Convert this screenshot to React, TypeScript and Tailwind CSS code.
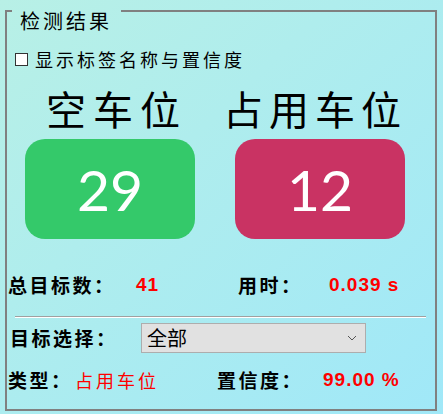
import React from "react";

const CJK = "font-['Noto_Sans_CJK_SC',sans-serif]";
const NUM = "font-['Liberation_Sans','Noto_Sans_CJK_SC',sans-serif]";

export default function App() {
  return (
    <div className="w-[443px] h-[414px] overflow-hidden bg-linear-to-br from-[#b8f0e6] to-[#a0e8f8] pt-[10px] pl-[5px]">
      <fieldset className="w-[432px] h-[401px] border-2 border-[#808080]">
        {/* Group title — sits just below the top edge */}
        <legend className={`ml-[5px] pl-[8px] pr-[9px] h-[2px] ${CJK}`}>
          <span className="block text-[20px] leading-[22px] tracking-[3px] text-black">检测结果</span>
        </legend>

        {/* Checkbox */}
        <div className={`mt-[36px] h-[22px] flex items-center pl-[8px] ${CJK}`}>
          <span className="w-[13px] h-[13px] border border-[#333] bg-white" />
          <span className="ml-[7px] text-[18px] tracking-[3px] text-black leading-none">显示标签名称与置信度</span>
        </div>

        {/* Big labels */}
        <div className={`mt-[18px] h-[40px] flex items-center pl-[39px] ${CJK}`}>
          <span className="w-[180px] text-[40px] leading-[40px] tracking-[7px] text-black">空车位</span>
          <span className="-ml-[3px] text-[40px] leading-[40px] tracking-[6px] text-black">占用车位</span>
        </div>

        {/* Counters */}
        <div className="mt-[11px] pl-[18px] flex gap-[40px]">
          <div className="w-[170px] h-[100px] rounded-[20px] bg-[#34c96a] flex items-center justify-center">
            <span className="font-['Lato',sans-serif] text-[57px] leading-none text-white">29</span>
          </div>
          <div className="w-[170px] h-[100px] rounded-[20px] bg-[#c93363] flex items-center justify-center">
            <span className="font-['Lato',sans-serif] text-[57px] leading-none text-white">12</span>
          </div>
        </div>

        {/* Total / time */}
        <div className="mt-[34px] h-[24px] flex items-center pl-[1px]">
          <span className={`w-[128px] ${CJK} font-bold text-[19px] tracking-[2.5px] text-black`}>总目标数：</span>
          <span className={`w-[102px] ${NUM} font-bold text-[19px] tracking-[1px] text-[#ff0000]`}>41</span>
          <span className={`w-[91px] ${CJK} font-bold text-[19px] tracking-[2.5px] text-black`}>用时：</span>
          <span className={`${NUM} font-bold text-[19px] tracking-[1px] text-[#ff0000]`}>0.039 s</span>
        </div>

        {/* Separator */}
        <div className="mt-[19px] ml-[8px] w-[411px] border-t border-[#a0a0a0] border-b border-b-white" />

        {/* Target select */}
        <div className="mt-[5px] h-[30px] flex items-center pl-[3px]">
          <span className={`w-[131px] ${CJK} font-bold text-[19px] tracking-[2.5px] text-black`}>目标选择：</span>
          <div className="w-[225px] h-[30px] bg-[#e1e1e1] border border-[#adadad] flex items-center justify-between pl-[5px] pr-[8px]">
            <span className={`${CJK} text-[20px] text-black leading-none`}>全部</span>
            <svg width="10" height="6" viewBox="0 0 10 6" fill="none">
              <path d="M1 1l4 4 4-4" stroke="#555" strokeWidth="1" />
            </svg>
          </div>
        </div>

        {/* Type / confidence */}
        <div className="mt-[15px] h-[24px] flex items-center pl-[1px]">
          <span className={`w-[67px] ${CJK} font-bold text-[19px] tracking-[2.5px] text-black`}>类型：</span>
          <span className={`w-[142px] ${CJK} text-[18px] tracking-[3px] text-[#ff0000]`}>占用车位</span>
          <span className={`w-[106px] ${CJK} font-bold text-[19px] tracking-[2.5px] text-black`}>置信度：</span>
          <span className={`${NUM} font-bold text-[19px] tracking-[1px] text-[#ff0000]`}>99.00 %</span>
        </div>
      </fieldset>
    </div>
  );
}
